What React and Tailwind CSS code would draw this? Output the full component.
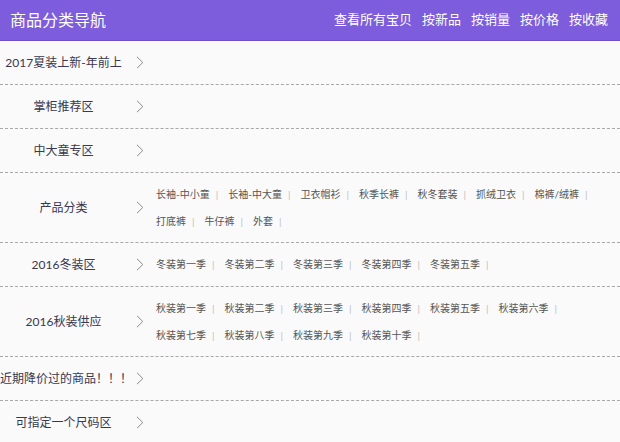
import React from "react";

const rows = [
  { label: "2017夏装上新-年前上", items: [] },
  { label: "掌柜推荐区", items: [] },
  { label: "中大童专区", items: [] },
  {
    label: "产品分类",
    items: ["长袖-中小童", "长袖-中大童", "卫衣帽衫", "秋季长裤", "秋冬套装", "抓绒卫衣", "棉裤/绒裤", "打底裤", "牛仔裤", "外套"],
  },
  { label: "2016冬装区", items: ["冬装第一季", "冬装第二季", "冬装第三季", "冬装第四季", "冬装第五季"] },
  {
    label: "2016秋装供应",
    items: ["秋装第一季", "秋装第二季", "秋装第三季", "秋装第四季", "秋装第五季", "秋装第六季", "秋装第七季", "秋装第八季", "秋装第九季", "秋装第十季"],
  },
  { label: "近期降价过的商品！！！", items: [] },
  { label: "可指定一个尺码区", items: [] },
];

function Chevron() {
  return (
    <svg width="8" height="13" viewBox="0 0 8 13" className="shrink-0">
      <path d="M1 0.8 L6.8 6.5 L1 12.2" fill="none" stroke="#8a8a8a" strokeWidth="1" />
    </svg>
  );
}

export default function App() {
  return (
    <div
      className="w-[620px] h-[442px] overflow-hidden bg-[#fafafa]"
      style={{ fontFamily: 'Lato, "Noto Sans CJK SC", sans-serif' }}
    >
      <div className="h-[41px] bg-[#7d5ddb] border-b border-[#6c4fcb] flex items-center justify-between pl-[10px] pr-[12px] text-white">
        <div className="text-[16px]">商品分类导航</div>
        <div className="flex gap-[10px] text-[13px]">
          <span>查看所有宝贝</span>
          <span>按新品</span>
          <span>按销量</span>
          <span>按价格</span>
          <span>按收藏</span>
        </div>
      </div>
      {rows.map((r, i) => (
        <div key={i} className="flex items-center min-h-[44px] border-b border-dashed border-[#a8a8a8]">
          <div className="w-[127px] shrink-0 text-center text-[12px] text-[#38384e] whitespace-nowrap">{r.label}</div>
          <div className="w-[29px] shrink-0 flex justify-start pl-[9px]">
            <Chevron />
          </div>
          {r.items.length > 0 && (
            <div className="flex flex-wrap flex-1 py-[8px] pr-[6px] text-[10px] leading-[26.5px] text-[#555]">
              {r.items.map((it, j) => (
                <span key={j} className="whitespace-nowrap">
                  {it}
                  <span className="ml-[6px] mr-[10px] text-[#bdbdbd]">|</span>
                </span>
              ))}
            </div>
          )}
        </div>
      ))}
    </div>
  );
}
